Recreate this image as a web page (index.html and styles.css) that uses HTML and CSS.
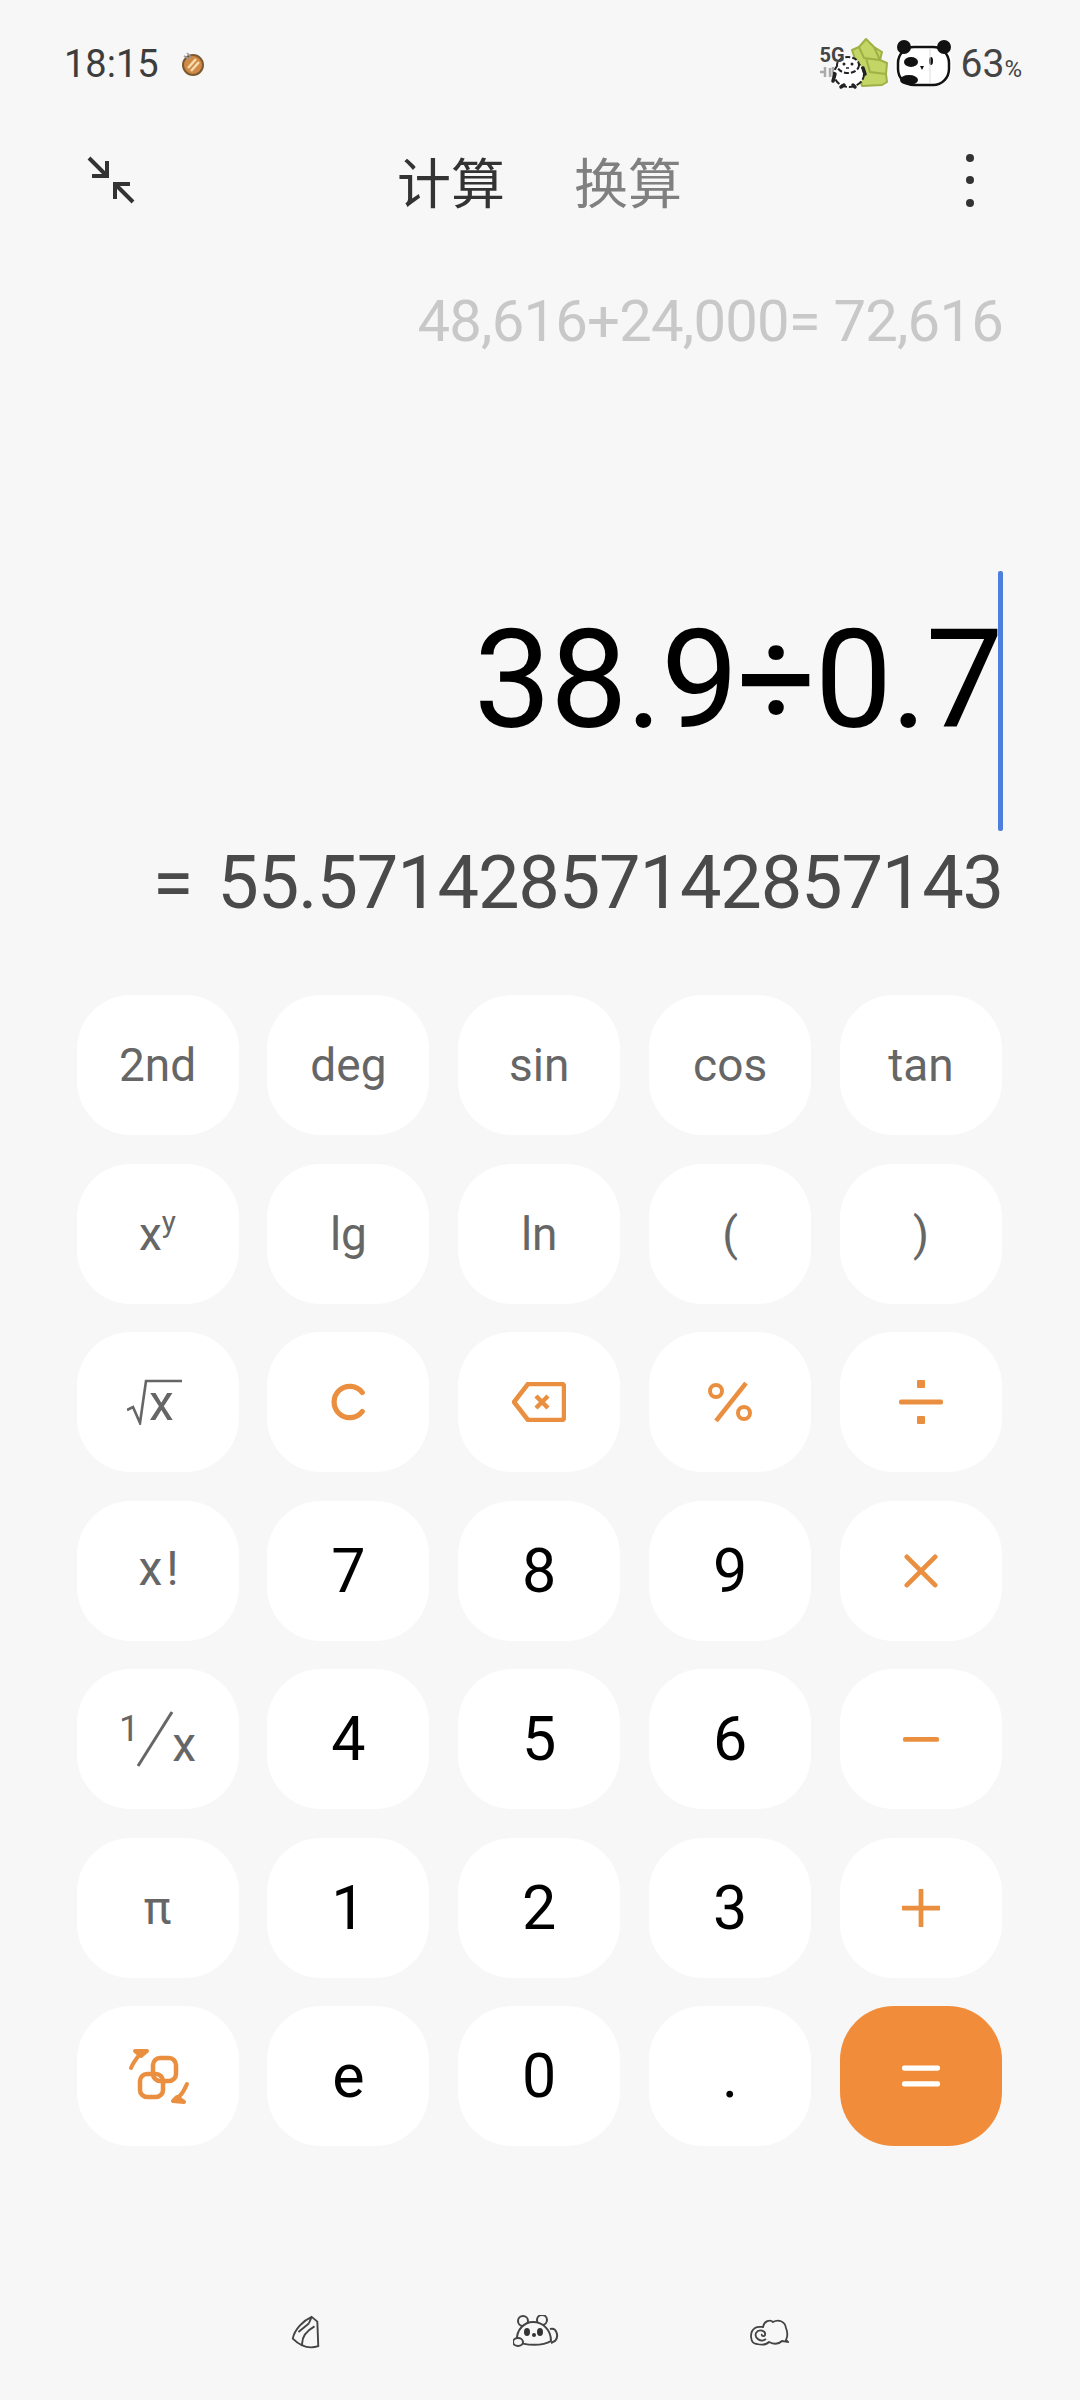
FILE: index.html
```html
<!DOCTYPE html>
<html lang="zh-CN">
<head>
  <meta charset="UTF-8" />
  <meta name="viewport" content="width=device-width, initial-scale=1.0" />
  <title>计算器</title>
  <link rel="stylesheet" href="styles.css">
</head>
<body>
  <div class="page">
    <div class="status">
      <div class="status-left">
        <span class="time">18:15</span>
        <svg class="shell" viewBox="0 0 24 26">
          <ellipse cx="12" cy="14" rx="10" ry="10" fill="#d08a45" stroke="#7b5a32" stroke-width="2"/>
          <path d="M7 17 15 8M10 20 18 11" stroke="#f4dcae" stroke-width="2.5"/>
          <path d="M3 5 8 8M6 2 10 6" stroke="#999" stroke-width="1.5"/>
        </svg>
      </div>
      <div class="status-right">
        <div class="signal">
          <svg class="bamboo-panda" viewBox="0 0 70 52">
            <path d="M32 12 39 9 46 1 54 9 62 14 60 22 67 25 66 36 67 44 62 47 42 48 36 24Z" fill="#c3d565" stroke="#a0b044" stroke-width="2" stroke-linejoin="round"/>
            <path d="M39 9 44 20 60 22M46 20 50 34 66 36M54 9 60 22" stroke="#a0b044" stroke-width="2" fill="none"/>
            <path d="M0 34H5M5 29V39M10 30V39M13 29V39" stroke="#aaa" stroke-width="2.500"/>
            <ellipse cx="29" cy="36" rx="15" ry="13" fill="#fff" stroke="#222" stroke-width="2" stroke-dasharray="6 2"/>
            <ellipse cx="28" cy="27" rx="11" ry="8" fill="#fff" stroke="#222" stroke-width="2" stroke-dasharray="5 2"/>
            <circle cx="24" cy="26" r="1.500" fill="#222"/>
            <circle cx="32" cy="26" r="1.500" fill="#222"/>
            <path d="M26 30h3" stroke="#222" stroke-width="1.500"/>
            <path d="M15 36 13 43M43 30 45 36M21 49 24 47M35 49 33 47" stroke="#222" stroke-width="3.500" stroke-linecap="round"/>
          </svg>
          <span class="five-g">5G</span>
        </div>
        <svg class="panda-battery" viewBox="0 0 60 50">
          <rect x="1" y="5" width="57" height="42" rx="19" fill="#fff"/>
          <rect x="4" y="8" width="51" height="38" rx="16" fill="#fff" stroke="#111" stroke-width="2.500"/>
          <circle cx="10" cy="8" r="7" fill="#111"/>
          <circle cx="50" cy="8" r="7" fill="#111"/>
          <ellipse cx="17" cy="23" rx="7" ry="5" fill="#111"/>
          <ellipse cx="37" cy="22" rx="2" ry="4" fill="#111"/>
          <path d="M26 27h4l-2 4z" fill="#111"/>
          <ellipse cx="15" cy="41" rx="9" ry="5" fill="#111"/>
          <path d="M36 10V44" stroke="#ddd"/>
        </svg>
        <span class="battery">63<small>%</small></span>
      </div>
    </div>

    <div class="toolbar">
      <svg class="shrink" viewBox="0 0 50 50">
        <path d="M3 3 21 21M21 6V21H6M47 47 29 29M29 44V29H44" fill="none" stroke="#333" stroke-width="4"/>
      </svg>
      <div class="tabs">
        <span class="tab active">计算</span>
        <span class="tab">换算</span>
      </div>
      <div class="more"><i></i><i></i><i></i></div>
    </div>

    <div class="history">48,616+24,000= 72,616</div>

    <div class="expression">
      <span class="expr-text">38.9÷0.7</span>
      <span class="caret"></span>
    </div>

    <div class="result">= 55.57142857142857143</div>

    <div class="keys">
      <div class="key fn">2nd</div>
      <div class="key fn">deg</div>
      <div class="key fn">sin</div>
      <div class="key fn">cos</div>
      <div class="key fn">tan</div>

      <div class="key fn"><span class="power">x<sup>y</sup></span></div>
      <div class="key fn">lg</div>
      <div class="key fn">ln</div>
      <div class="key fn">(</div>
      <div class="key fn">)</div>

      <div class="key fn">
        <span class="root">
          <svg viewBox="0 0 55 46"><path d="M0 31 6 28 13 44 19 2H55" fill="none" stroke="#666" stroke-width="2.600"/></svg>
          <span>x</span>
        </span>
      </div>
      <div class="key">
        <svg class="icon" viewBox="0 0 40 40"><path d="M35 10A16.500 16.500 0 1 0 35 30" fill="none" stroke="#ea8f3f" stroke-width="5.500" stroke-linecap="round"/></svg>
      </div>
      <div class="key">
        <svg class="icon wide" viewBox="0 0 54 40"><path d="M16 2H50a2 2 0 0 1 2 2V36a2 2 0 0 1-2 2H16L2 20Z" fill="none" stroke="#ea8f3f" stroke-width="4.500" stroke-linejoin="round"/><path d="M24 14 36 26M36 14 24 26" stroke="#ea8f3f" stroke-width="4.500"/></svg>
      </div>
      <div class="key">
        <svg class="icon wide" viewBox="0 0 46 40"><circle cx="9" cy="9" r="6" fill="none" stroke="#ea8f3f" stroke-width="4"/><circle cx="37" cy="31" r="6" fill="none" stroke="#ea8f3f" stroke-width="4"/><path d="M39 1 9 39" stroke="#ea8f3f" stroke-width="4.500"/></svg>
      </div>
      <div class="key">
        <svg class="icon tall" viewBox="0 0 46 46"><rect x="19" y="1" width="8" height="8" rx="1" fill="#ea8f3f"/><rect x="19" y="37" width="8" height="8" rx="1" fill="#ea8f3f"/><rect x="1" y="20.500" width="44" height="5" rx="2" fill="#ea8f3f"/></svg>
      </div>

      <div class="key fn"><span class="fact">x!</span></div>
      <div class="key num">7</div>
      <div class="key num">8</div>
      <div class="key num">9</div>
      <div class="key">
        <svg class="icon small" viewBox="0 0 36 36"><path d="M3 3 33 33M33 3 3 33" stroke="#ea8f3f" stroke-width="5" stroke-linecap="round"/></svg>
      </div>

      <div class="key fn">
        <span class="inverse">
          <sup>1</sup>
          <svg viewBox="0 0 40 56"><path d="M37 1 3 55" stroke="#666" stroke-width="3"/></svg>
          <span>x</span>
        </span>
      </div>
      <div class="key num">4</div>
      <div class="key num">5</div>
      <div class="key num">6</div>
      <div class="key">
        <svg class="icon" viewBox="0 0 40 40"><rect x="1" y="18" width="38" height="5" rx="2" fill="#ea8f3f"/></svg>
      </div>

      <div class="key fn">π</div>
      <div class="key num">1</div>
      <div class="key num">2</div>
      <div class="key num">3</div>
      <div class="key">
        <svg class="icon" viewBox="0 0 40 40"><path d="M1 20H39M20 1V39" stroke="#ea8f3f" stroke-width="5" stroke-linecap="round"/></svg>
      </div>

      <div class="key">
        <svg class="icon swap" viewBox="0 0 62 57">
          <rect x="25" y="10" width="23" height="23" rx="7" fill="none" stroke="#ea8f3f" stroke-width="4.500"/>
          <rect x="12" y="26" width="23" height="23" rx="7" fill="none" stroke="#ea8f3f" stroke-width="4.500"/>
          <path d="M3 20C5 15 8 11 12 6M7 3 19 3 13 8ZM59 36C57 41 54 46 50 50M45 53 56 54 49 49Z" fill="#ea8f3f" stroke="#ea8f3f" stroke-width="4" stroke-linecap="round" stroke-linejoin="round"/>
        </svg>
      </div>
      <div class="key num">e</div>
      <div class="key num">0</div>
      <div class="key num">.</div>
      <div class="key equals">
        <svg class="icon" viewBox="0 0 36 24"><rect x="0" y="2" width="36" height="5" rx="2" fill="#fff"/><rect x="0" y="17" width="36" height="5" rx="2" fill="#fff"/></svg>
      </div>
    </div>

    <div class="bottom-nav">
      <svg class="nav-icon bamboo" viewBox="0 0 32 36">
        <path d="M22 2 28 7 29 33C20 36 10 33 2 25 4 15 13 6 22 2Z M8 18 19 9 M12 32C11 23 18 16 25 12 M19 9 22 2" fill="none" stroke="#444" stroke-width="2"/>
      </svg>
      <svg class="nav-icon panda" viewBox="0 0 46 34">
        <circle cx="10" cy="6" r="5" fill="none" stroke="#444" stroke-width="2"/>
        <circle cx="29" cy="5" r="5" fill="none" stroke="#444" stroke-width="2"/>
        <path d="M4 26C3 14 12 7 20 7 30 7 38 15 38 26 30 31 12 31 4 26Z" fill="#f7f7f7" stroke="#444" stroke-width="2"/>
        <path d="M37 14C44 12 46 22 42 26L38 28" fill="none" stroke="#444" stroke-width="2"/>
        <ellipse cx="5" cy="27" rx="5" ry="4" fill="#f7f7f7" stroke="#444" stroke-width="2"/>
        <ellipse cx="14" cy="17" rx="3" ry="4" fill="#333"/>
        <ellipse cx="27" cy="17" rx="3" ry="4" fill="#333"/>
        <circle cx="21" cy="20" r="2" fill="#333"/>
      </svg>
      <svg class="nav-icon cloud" viewBox="0 0 40 28">
        <path d="M8 26C1 26 0 14 6 10 9 8 12 9 14 9 15 3 21 1 24 4 29 1 36 3 37 10 39 15 38 20 37 22L39 24 33 23C29 27 24 26 20 24 17 27 12 27 8 26Z" fill="none" stroke="#444" stroke-width="1.800"/>
        <path d="M17 21C12 25 5 20 7 15 10 10 17 13 16 17 15 19 12 18 13 16" fill="none" stroke="#444" stroke-width="1.800"/>
      </svg>
    </div>
  </div>
</body>
</html>
```

FILE: styles.css
```css
* {
  box-sizing: border-box;
  padding: 0;
  margin: 0;
}

body {
  background-color: #f7f7f7;
  font-family: Roboto, 'Noto Sans CJK SC', sans-serif;
}

.page {
  width: 1080px;
  height: 2400px;
  display: flex;
  flex-direction: column;
}

.status {
  height: 128px;
  padding: 36px 58px 0 64px;
  display: flex;
  justify-content: space-between;
  align-items: flex-start;
}

.status-left,
.status-right {
  display: flex;
  align-items: center;
  height: 56px;
}

.time {
  font-size: 38px;
  color: #3d3d3d;
}

.shell {
  width: 24px;
  height: 26px;
  margin-left: 22px;
}

.signal {
  position: relative;
  width: 70px;
  height: 52px;
}

.five-g {
  position: absolute;
  left: 0;
  top: 7px;
  font-size: 20px;
  line-height: 20px;
  font-weight: 700;
  color: #444;
}

.bamboo-panda {
  width: 70px;
  height: 52px;
  display: block;
}

.panda-battery {
  width: 60px;
  height: 50px;
  margin-left: 4px;
}

.battery {
  margin-left: 7px;
  font-size: 39px;
  color: #444;
}

.battery small {
  font-size: 24px;
}

.toolbar {
  height: 104px;
  padding: 0 86px;
  display: flex;
  align-items: center;
  position: relative;
}

.shrink {
  width: 50px;
  height: 50px;
}

.tabs {
  display: flex;
  gap: 69px;
  margin-left: 261px;
}

.tab {
  font-size: 54px;
  color: #808080;
  font-family: 'Noto Sans CJK SC', sans-serif;
}

.tab.active {
  color: #333;
}

.more {
  margin-left: auto;
  margin-right: 20px;
  display: flex;
  flex-direction: column;
  gap: 14.500px;
}

.more i {
  width: 8px;
  height: 8px;
  border-radius: 50%;
  background-color: #333;
}

.history {
  margin-top: 54px;
  padding-right: 77px;
  height: 70px;
  line-height: 70px;
  text-align: right;
  font-size: 58px;
  letter-spacing: -0.800px;
  color: #c8c8c8;
}

.expression {
  margin-top: 215px;
  height: 260px;
  padding-right: 78px;
  display: flex;
  justify-content: flex-end;
  position: relative;
}

.expr-text {
  font-size: 138px;
  line-height: 218px;
  letter-spacing: -1.400px;
  color: #000;
}

.caret {
  position: absolute;
  right: 77px;
  top: 0;
  width: 5px;
  height: 260px;
  border-radius: 2px;
  background-color: #4f7fdc;
}

.result {
  margin-top: 12px;
  padding-right: 77px;
  height: 80px;
  line-height: 80px;
  text-align: right;
  font-size: 74px;
  letter-spacing: -1.200px;
  word-spacing: 8px;
  color: #4a4a4a;
}

.keys {
  margin-top: 72px;
  padding: 0 78px 0 76.500px;
  display: grid;
  grid-template-columns: repeat(5, 1fr);
  grid-auto-rows: 140px;
  gap: 28.500px 28.750px;
}

.key {
  background-color: #fff;
  border-radius: 54px;
  display: flex;
  align-items: center;
  justify-content: center;
  font-size: 46px;
}

.fn {
  color: #666;
}

.power {
  line-height: 1;
}

.power sup {
  font-size: 30px;
  line-height: 0;
  vertical-align: 18px;
}

.fact {
  letter-spacing: 4px;
  font-size: 48px;
  margin: -4px 0 0 6px;
}

.num {
  font-size: 61px;
  color: #000;
}

.equals {
  background-color: #f18d3a;
}

.icon {
  width: 38px;
  height: 38px;
}

.icon.wide {
  width: 54px;
  height: 40px;
}

.icon.tall {
  width: 46px;
  height: 46px;
}

.icon.small {
  width: 34px;
  height: 34px;
}

.icon.swap {
  width: 62px;
  height: 57px;
  margin-left: 2px;
}

.root,
.inverse {
  display: flex;
  align-items: flex-end;
}

.root {
  margin-right: 6px;
}

.root svg {
  width: 55px;
  height: 46px;
}

.root span {
  margin-left: -33px;
  width: 33px;
  font-size: 50px;
  line-height: 44px;
}

.inverse svg {
  width: 40px;
  height: 56px;
}

.inverse span {
  line-height: 44px;
  font-size: 48px;
  margin-left: -3px;
}

.inverse sup {
  font-size: 36px;
  line-height: 1;
  align-self: flex-start;
  margin-right: -4px;
}

.bottom-nav {
  margin-top: auto;
  height: 136px;
  padding-left: 2px;
  display: flex;
  align-items: center;
  justify-content: center;
  gap: 190px;
}

.nav-icon {
  width: 32px;
  height: 34px;
}

.nav-icon.bamboo {
  margin-right: 1px;
  margin-left: -3px;
}

.nav-icon.panda {
  width: 46px;
}

.nav-icon.cloud {
  width: 40px;
  height: 30px;
}
```
